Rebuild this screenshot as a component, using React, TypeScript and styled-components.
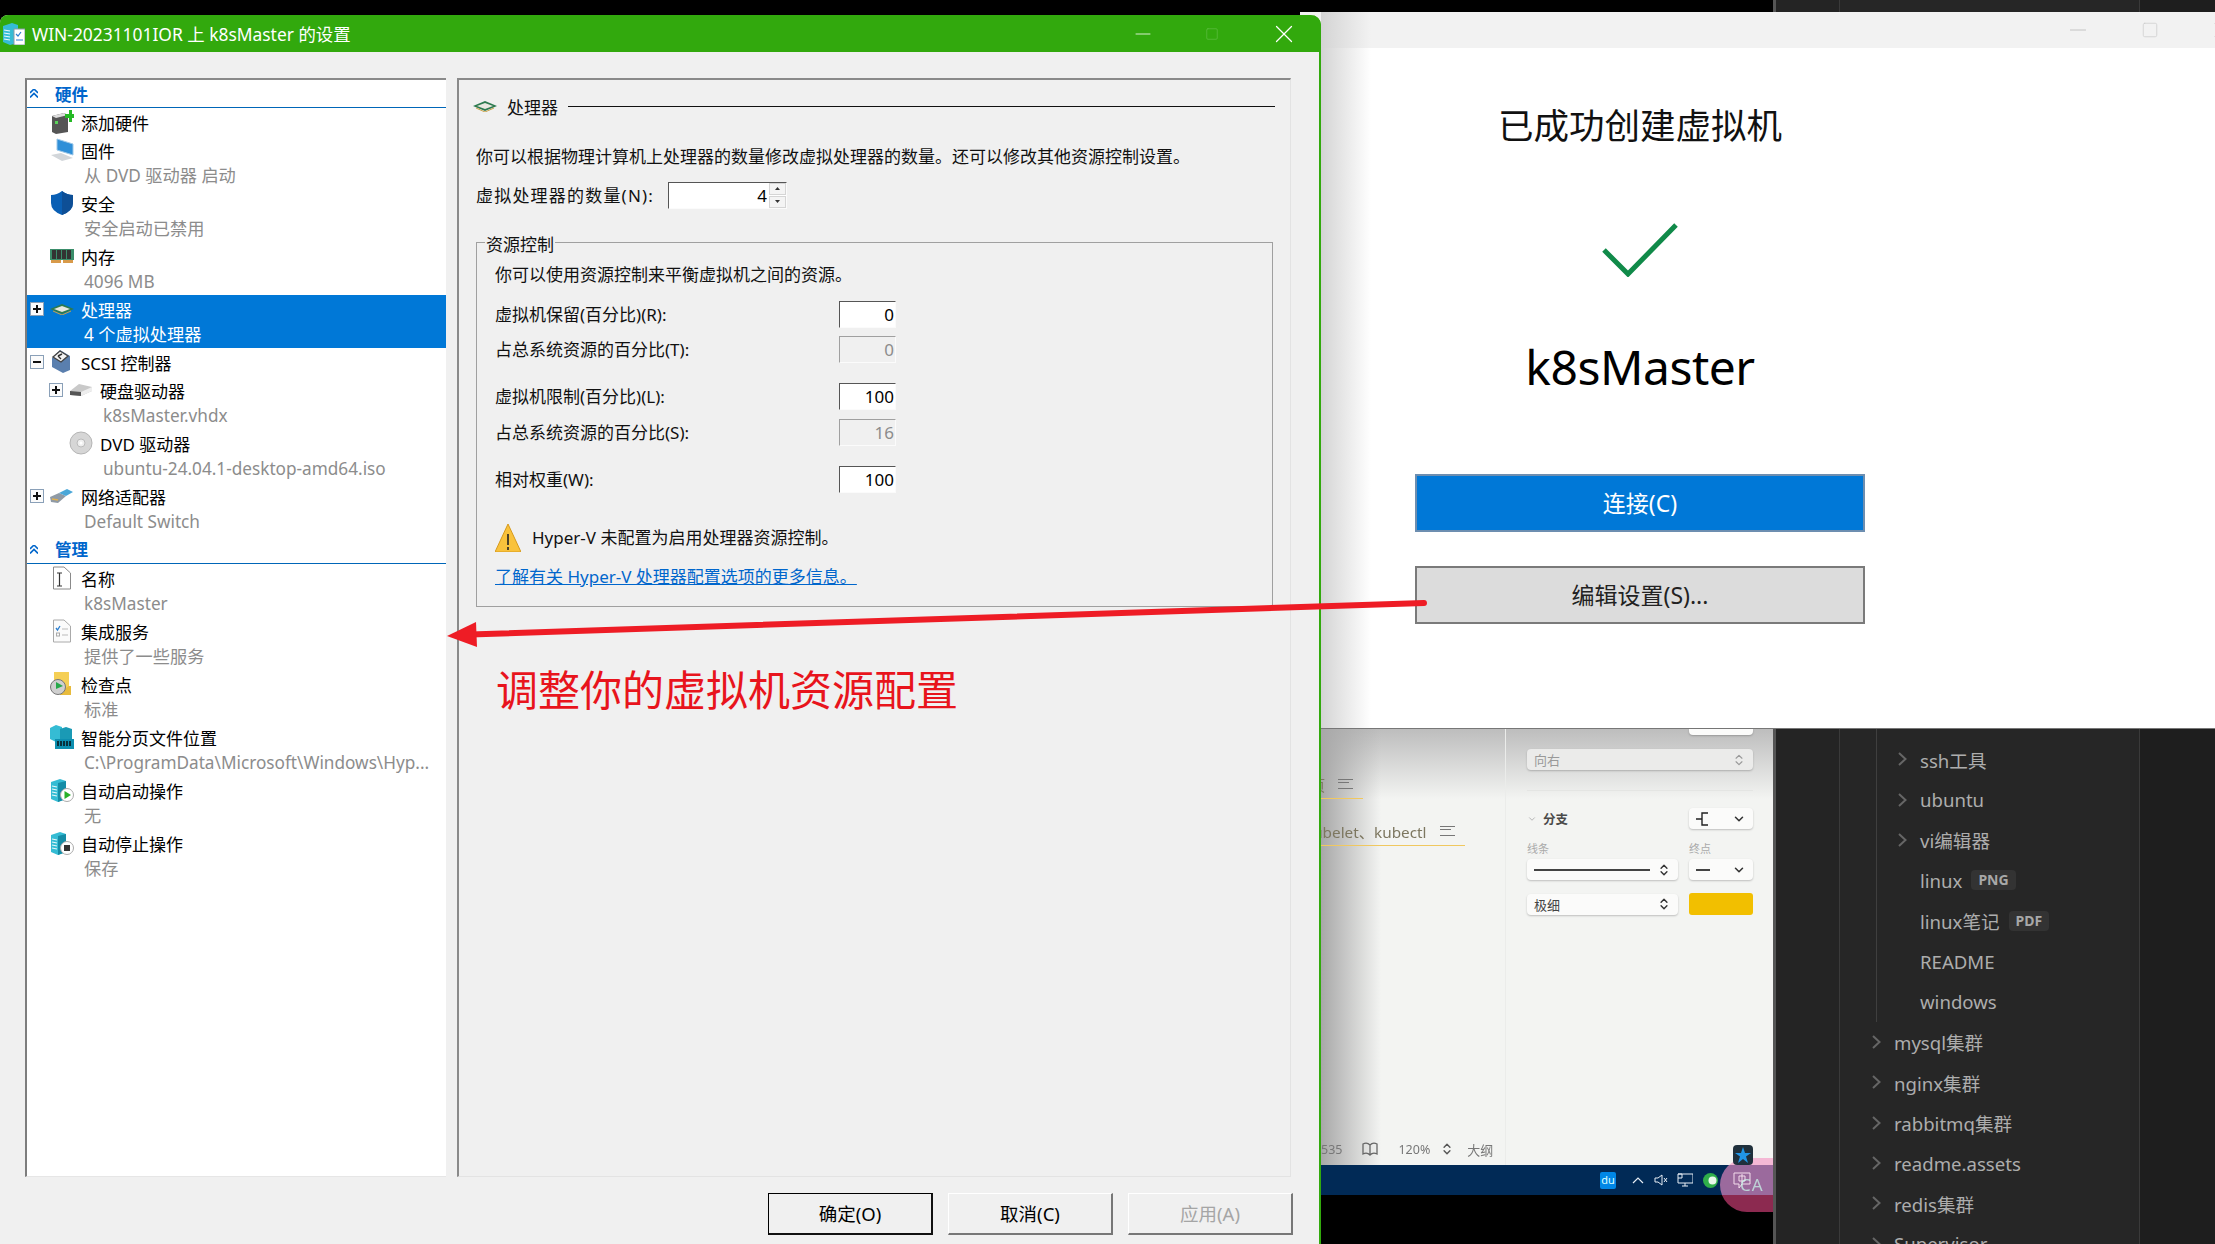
import React from 'react';
import styled, { createGlobalStyle } from 'styled-components';
import { ChevronDown, ChevronsUpDown, Minus, Square, X } from 'lucide-react';

const UI = `"Noto Sans", "Noto Sans CJK SC", sans-serif`;

const Global = createGlobalStyle`
	html, body {
		margin: 0;
		width: 2215px;
		height: 1244px;
		overflow: hidden;
		background: #000;
		font-family: ${UI};
	}
	* { box-sizing: border-box; }
`;

const Desktop = styled.div`
	position: relative;
	width: 2215px;
	height: 1244px;
	overflow: hidden;
	background: #000;
`;

/* ---------- dark file tree behind everything ---------- */

const FilePanel = styled.div`
	position: absolute;
	left: 1773px;
	top: 0;
	width: 442px;
	height: 1244px;
	display: flex;
	background: #1e1e1e;
	border-left: 3px solid #555;
`;

const FileRail = styled.div`
	width: 64px;
	background: #242424;
	border-right: 1px solid #3a3a3a;
`;

const FileTree = styled.div`
	width: 300px;
	height: 1244px;
	overflow: hidden;
	padding-top: 739px;
	background: #262626;
	border-right: 1px solid #3a3a3a;
`;

const FileGroup = styled.div`
	margin-left: 36px;
	margin-top: -11px;
	padding-top: 11px;
	border-left: 1px solid #3f3f3f;
`;

const FileRow = styled.div<{ $nested?: boolean }>`
	height: 40.4px;
	display: flex;
	align-items: center;
	padding-left: ${p => (p.$nested ? 79 : 54)}px;
	position: relative;
	margin-left: ${p => (p.$nested ? -36 : 0)}px;
	color: #adadad;
	font-size: 18.6px;
	white-space: nowrap;
	svg {
		position: absolute;
		left: ${p => (p.$nested ? 57 : 32)}px;
	}
`;

const FileBadge = styled.span`
	margin-left: 9px;
	padding: 0 7px;
	height: 20px;
	line-height: 20px;
	border-radius: 4px;
	background: #333;
	color: #a8a8a8;
	font-size: 14px;
	font-weight: 700;
`;

/* ---------- light editor behind the windows ---------- */

const Editor = styled.div`
	position: absolute;
	left: 1321px;
	top: 729px;
	width: 452px;
	height: 515px;
	display: flex;
	flex-direction: column;
	background: #000;
`;

const EditorBody = styled.div`
	position: relative;
	height: 436px;
	display: flex;
	background: #f3f4f2;
	&::before {
		content: '';
		position: absolute;
		inset: 0 0 auto 0;
		height: 70px;
		background: linear-gradient(#bdbdbd, rgba(243, 244, 242, 0));
	}
	&::after {
		content: '';
		position: absolute;
		inset: 0 auto 0 0;
		width: 60px;
		background: linear-gradient(90deg, #a8a8a8, rgba(243, 244, 242, 0));
	}
`;

const DocPane = styled.div`
	position: relative;
	z-index: 1;
	width: 185px;
	overflow: hidden;
	display: flex;
	flex-direction: column;
	border-right: 1px solid #ebecea;
	filter: blur(0.4px);
`;

const DocLine = styled.div<{ $width: number; $top: number }>`
	width: ${p => p.$width}px;
	height: 30px;
	margin-top: ${p => p.$top}px;
	display: flex;
	align-items: center;
	gap: 13px;
	white-space: nowrap;
	color: #7d7760;
	font-size: 15.3px;
	border-bottom: 1.5px solid #f0c860;
	overflow: hidden;
`;

const DocFragment = styled.span<{ $shift: number }>`
	margin-left: ${p => p.$shift}px;
`;

const MenuLines = styled.span`
	flex: none;
	width: 15px;
	height: 10px;
	border-top: 1.5px solid #777;
	border-bottom: 1.5px solid #777;
	position: relative;
	&::after {
		content: '';
		position: absolute;
		left: 0;
		top: 2.5px;
		width: 11px;
		border-top: 1.5px solid #777;
	}
`;

const DocStatus = styled.div`
	margin-top: auto;
	height: 32px;
	display: flex;
	align-items: center;
	gap: 20px;
	color: #777;
	font-size: 12.5px;
	white-space: nowrap;
`;

const StatusZoom = styled.span`
	display: flex;
	align-items: center;
	gap: 10px;
	svg { color: #555; }
`;

const StatusOutline = styled.span`
	margin-left: -7px;
	font-size: 13px;
`;

const PropsPane = styled.div`
	position: relative;
	z-index: 1;
	flex: 1;
	padding: 0 20px 0 21px;
	color: #444;
	font-size: 12.5px;
`;

const PropGrid = styled.div<{ $top?: number }>`
	display: grid;
	grid-template-columns: 151px 64px;
	column-gap: 11px;
	align-items: center;
	margin-top: ${p => p.$top || 0}px;
`;

const Select = styled.div<{ $muted?: boolean; $stub?: boolean; $top?: number }>`
	height: ${p => (p.$stub ? 6 : 21)}px;
	margin-top: ${p => p.$top || 0}px;
	padding: 0 7px;
	display: flex;
	align-items: center;
	justify-content: space-between;
	background: ${p => (p.$muted ? '#ebebea' : '#fbfbfa')};
	color: ${p => (p.$muted ? '#999' : '#444')};
	border-radius: 0 0 4px 4px;
	border-top-left-radius: ${p => (p.$stub ? 0 : 4)}px;
	border-top-right-radius: ${p => (p.$stub ? 0 : 4)}px;
	box-shadow: 0 1px 2px rgba(0, 0, 0, 0.22);
	font-size: 13px;
	svg { color: ${p => (p.$muted ? '#999' : '#333')}; }
`;

const Swatch = styled.div`
	height: 22px;
	border-radius: 3px;
	background: #f2bf00;
`;

const PropRule = styled.div`
	height: 1px;
	margin: 20px 0 17px;
	background: #e4e5e3;
`;

const PropTitle = styled.div`
	display: flex;
	align-items: center;
	gap: 6px;
	font-weight: 700;
	color: #4a4a4a;
	svg { color: #aaa; }
`;

const PropHint = styled.div`
	height: 20px;
	line-height: 20px;
	margin-top: 10px;
	color: #aaa;
	font-size: 11px;
`;

const LineSample = styled.span<{ $width: number }>`
	width: ${p => p.$width}px;
	height: 2px;
	background: #444;
`;

const Taskbar = styled.div`
	height: 30px;
	display: flex;
	align-items: center;
	padding-left: 279px;
	gap: 9.6px;
	background: #012a56;
	color: #e8eef5;
`;

const DuBadge = styled.span`
	width: 16px;
	height: 17px;
	margin-right: 6.4px;
	line-height: 15px;
	text-align: center;
	border-radius: 2px;
	background: #0087e6;
	color: #dff;
	font-size: 11px;
`;

const ImeBubble = styled.div`
	position: absolute;
	left: 399px;
	top: 429px;
	width: 53px;
	height: 54px;
	border-radius: 27px 0 0 27px;
	background: linear-gradient(#f4b8d5 0 13%, #9b6a9d 13% 68%, #8c2a50 68%);
	color: #cfe;
	overflow: hidden;
`;

const ImeLetters = styled.span`
	position: absolute;
	left: 20px;
	top: 15px;
	font-size: 17px;
	letter-spacing: 1px;
	opacity: 0.7;
`;

const ImeChat = styled.svg`
	position: absolute;
	left: 13px;
	top: 14px;
`;

const ImeStar = styled.div`
	position: absolute;
	left: 412px;
	top: 416px;
	width: 20px;
	height: 20px;
	border-radius: 4px;
	background: #20303c;
	display: flex;
	align-items: center;
	justify-content: center;
`;

/* ---------- "created" wizard window ---------- */

const WizardWindow = styled.div`
	position: absolute;
	left: 1300px;
	top: 12px;
	width: 915px;
	height: 717px;
	background: #fff;
	border-bottom: 1px solid #777;
	&::before {
		content: '';
		position: absolute;
		left: 21px;
		top: 0;
		bottom: 0;
		width: 50px;
		background: linear-gradient(90deg, #d4d4d4, rgba(255, 255, 255, 0));
	}
`;

const WizardBar = styled.div`
	height: 36px;
	display: flex;
	align-items: center;
	justify-content: flex-end;
	gap: 50px;
	background: #f2f2f2;
	color: #aaa;
	margin-right: -18px;
`;

const WizardBody = styled.div`
	width: 450px;
	margin-left: 115px;
	display: flex;
	flex-direction: column;
	align-items: center;
`;

const WizardTitle = styled.div`
	margin-top: 52px;
	height: 50px;
	line-height: 50px;
	font-size: 35.5px;
	color: #111;
`;

const CheckMark = styled.svg`
	margin-top: 73px;
	display: block;
`;

const VmName = styled.div`
	margin-top: 55px;
	height: 70px;
	line-height: 70px;
	font-size: 48px;
	letter-spacing: -0.5px;
	color: #000;
`;

const WizardButton = styled.div<{ $primary?: boolean }>`
	width: 450px;
	height: 58px;
	margin-top: ${p => (p.$primary ? 72 : 34)}px;
	padding-bottom: 2px;
	display: flex;
	align-items: center;
	justify-content: center;
	font-size: 23px;
	background: ${p => (p.$primary ? '#0078d7' : '#dcdcdc')};
	color: ${p => (p.$primary ? '#fff' : '#222')};
	border: 2px solid ${p => (p.$primary ? '#6d8eb0' : '#7a7a7a')};
`;

/* ---------- settings dialog ---------- */

const Dialog = styled.div`
	position: absolute;
	left: 0;
	top: 15px;
	width: 1321px;
	height: 1229px;
	display: flex;
	flex-direction: column;
	background: #f0f0f0;
	border-right: 2px solid #32a90d;
	border-top-left-radius: 8px;
	border-top-right-radius: 10px;
`;

const TitleBar = styled.div`
	flex: none;
	height: 37px;
	margin-right: -2px;
	display: flex;
	align-items: center;
	padding-left: 3px;
	background: #32a90d;
	color: #fff;
	font-size: 17.4px;
	border-top-left-radius: 8px;
	border-top-right-radius: 10px;
`;

const TitleText = styled.span`
	margin-left: 7px;
	flex: 1;
`;

const TitleButtons = styled.div`
	display: flex;
	align-items: center;
	gap: 50px;
	margin-right: 22px;
`;

const DialogBody = styled.div`
	height: 1099px;
	margin-top: 26px;
	padding-left: 25px;
	display: flex;
	gap: 11px;
`;

const TreePane = styled.div`
	width: 421px;
	height: 100%;
	background: #fff;
	border-top: 2px solid #8a8a8a;
	border-left: 2px solid #7d7d7d;
	border-bottom: 1px solid #e6e6e6;
	font-size: 17px;
`;

const SectionHead = styled.div<{ $tall?: boolean }>`
	height: ${p => (p.$tall ? 29 : 28)}px;
	display: flex;
	align-items: center;
	padding-left: 3px;
	border-bottom: 1px solid #0066b8;
	color: #0066cc;
	font-weight: 700;
	font-size: 16.5px;
`;

const SectionLabel = styled.span`
	margin-left: 17px;
`;

const Entry = styled.div<{ $selected?: boolean }>`
	background: ${p => (p.$selected ? '#0078d7' : 'transparent')};
	color: ${p => (p.$selected ? '#fff' : '#000')};
`;

const EntryTitle = styled.div<{ $level: number }>`
	height: 28px;
	display: flex;
	align-items: center;
	padding-left: ${p => 3 + p.$level * 19}px;
	white-space: nowrap;
`;

const ExpanderSlot = styled.span`
	flex: none;
	width: 20px;
	display: flex;
	align-items: center;
`;

const IconSlot = styled.span`
	flex: none;
	width: 31px;
	display: flex;
	align-items: center;
`;

const EntrySub = styled.div<{ $level: number; $selected?: boolean }>`
	height: 25px;
	line-height: 23px;
	padding-left: ${p => 57 + p.$level * 19}px;
	font-size: 17.2px;
	color: ${p => (p.$selected ? '#fff' : '#8c8c8c')};
	white-space: nowrap;
`;

const Expander = styled.span`
	width: 14px;
	height: 14px;
	display: block;
	position: relative;
	background: #fbfbfb;
	border: 1px solid #8aa0b8;
`;

const ExpanderBar = styled.span<{ $vertical?: boolean }>`
	position: absolute;
	background: #111;
	left: ${p => (p.$vertical ? 5 : 2)}px;
	top: ${p => (p.$vertical ? 2 : 5)}px;
	width: ${p => (p.$vertical ? 2 : 8)}px;
	height: ${p => (p.$vertical ? 8 : 2)}px;
`;

const DetailPane = styled.div`
	width: 834px;
	height: 100%;
	padding-left: 17px;
	border-top: 2px solid #8a8a8a;
	border-left: 2px solid #8a8a8a;
	border-right: 1px solid #e3e3e3;
	border-bottom: 1px solid #e3e3e3;
	font-size: 17px;
	color: #111;
`;

const DetailHead = styled.div`
	margin: 13px 0 0 -3px;
	height: 26px;
	display: flex;
	align-items: center;
	gap: 10px;
	white-space: nowrap;
	svg { flex: none; }
`;

const HeadRule = styled.span`
	flex: none;
	width: 707px;
	height: 1px;
	background: #111;
`;

const Paragraph = styled.div<{ $top: number }>`
	margin-top: ${p => p.$top}px;
	height: 24px;
	line-height: 24px;
	white-space: nowrap;
`;

const CountRow = styled.div`
	margin-top: 13px;
	height: 26px;
	display: flex;
	align-items: center;
`;

const CountLabel = styled.span`
	width: 192px;
	margin-top: -2px;
	letter-spacing: 1.2px;
	white-space: nowrap;
`;

const NumberBox = styled.div<{ $disabled?: boolean; $width: number }>`
	width: ${p => p.$width}px;
	height: 27px;
	line-height: 25px;
	padding-right: 1px;
	text-align: right;
	background: ${p => (p.$disabled ? '#f0f0f0' : '#fff')};
	color: ${p => (p.$disabled ? '#8c8c8c' : '#000')};
	border-top: 1px solid ${p => (p.$disabled ? '#a0a0a0' : '#555')};
	border-left: 1px solid ${p => (p.$disabled ? '#a0a0a0' : '#555')};
	border-right: 1px solid #fbfbfb;
	border-bottom: 1px solid #fbfbfb;
`;

const SpinBox = styled(NumberBox)`
	display: flex;
	justify-content: flex-end;
	padding-right: 0;
`;

const SpinValue = styled.span`
	margin-right: 2px;
`;

const SpinButtons = styled.span`
	width: 17px;
	display: flex;
	flex-direction: column;
	gap: 1px;
`;

const SpinButton = styled.span`
	flex: 1;
	display: flex;
	align-items: center;
	justify-content: center;
	background: #f4f4f4;
	border: 1px solid #d5d5d5;
	svg { display: block; }
`;

const ResourceBox = styled.div`
	position: relative;
	margin-top: 34px;
	width: 797px;
	height: 365px;
	padding: 18px 0 0 18px;
	border: 1px solid #a0a0a0;
`;

const Legend = styled.span`
	position: absolute;
	left: 8px;
	top: -10px;
	padding: 0 1px;
	line-height: 24px;
	background: #f0f0f0;
`;

const FieldRow = styled.div<{ $top: number }>`
	margin-top: ${p => p.$top}px;
	display: flex;
	align-items: center;
	height: 27px;
`;

const FieldLabel = styled.span`
	width: 344px;
	margin-top: -3px;
	white-space: nowrap;
`;

const WarningRow = styled.div`
	margin-top: 31px;
	height: 28px;
	display: flex;
	align-items: center;
	gap: 11px;
	white-space: nowrap;
`;

const WarningText = styled.span`
	margin-top: -3px;
`;

const HelpLink = styled.div`
	margin-top: 13px;
	height: 24px;
	line-height: 24px;
	color: #0066cc;
	text-decoration: underline;
	white-space: nowrap;
`;

const Footer = styled.div`
	margin-top: 16px;
	padding-left: 768px;
	display: flex;
	gap: 15px;
`;

const DialogButton = styled.div<{ $default?: boolean; $disabled?: boolean }>`
	width: 165px;
	height: 42px;
	padding-bottom: 2px;
	display: flex;
	align-items: center;
	justify-content: center;
	font-size: 18.5px;
	background: #f0f0f0;
	color: ${p => (p.$disabled ? '#a5a5a5' : '#000')};
	border-top: 1px solid ${p => (p.$default ? '#000' : '#fff')};
	border-left: 1px solid ${p => (p.$default ? '#000' : '#fff')};
	border-right: 2px solid ${p => (p.$default ? '#111' : '#777')};
	border-bottom: 2px solid ${p => (p.$default ? '#111' : '#777')};
`;

/* ---------- red annotation on top ---------- */

const AnnotationArrow = styled.svg`
	position: absolute;
	left: 0;
	top: 0;
	pointer-events: none;
`;

const AnnotationText = styled.div`
	position: absolute;
	left: 496px;
	top: 660px;
	line-height: 60px;
	font-size: 42px;
	color: #e8141c;
	white-space: nowrap;
`;

/* ---------- drawn icons ---------- */

const Ico = ({ w = 24, h = 24, vb, children }: { w?: number; h?: number; vb?: string; children: React.ReactNode }) => (
	<svg width={w} height={h} viewBox={vb || `0 0 ${w} ${h}`} style={{ display: 'block', flex: 'none' }}>
		{children}
	</svg>
);

const ServerShape = () => (
	<>
		<path d="M1 4 L10 1 L16 3 L16 21 L8 24 L1 21 Z" fill="#35bcd4" />
		<path d="M8 5 L16 3 L16 21 L8 24 Z" fill="#148ca6" />
		<path d="M2 8 L7 9 M2 11 L7 12 M2 14 L7 15 M2 17 L7 18" stroke="#e8f8fb" strokeWidth="1.2" />
	</>
);

const AddHardwareIcon = () => (
	<Ico>
		<path d="M2 6 L14 3 L18 5 L18 22 L6 24 L2 22 Z" fill="#555" />
		<path d="M2 6 L14 3 L18 5 L6 8 Z" fill="#ddd" />
		<rect x="5" y="11" width="3" height="3" fill="#5bd35b" />
		<path d="M15 4 H19 V0 H22 V4 H25 V8 H22 V12 H19 V8 H15 Z" fill="#25b925" />
	</Ico>
);

const FirmwareIcon = () => (
	<Ico>
		<path d="M7 1 L23 6 L23 17 L7 12 Z" fill="#2f8fd8" stroke="#9cc7e8" />
		<path d="M1 17 L11 15 L23 20 L12 23 Z" fill="#d2d6da" />
	</Ico>
);

const ShieldIcon = () => (
	<Ico>
		<path d="M1 4 Q7 4 12 0 Q17 4 23 4 L23 12 Q23 20 12 24 Q1 20 1 12 Z" fill="#0a5fb4" />
		<path d="M12 0 Q17 4 23 4 L23 12 Q23 20 12 24 Z" fill="#0e4f96" />
	</Ico>
);

const MemoryIcon = () => (
	<Ico h={16}>
		<rect x="0" y="1" width="24" height="11" fill="#3a8d6a" />
		<rect x="2" y="2" width="4" height="9" fill="#333" />
		<rect x="7" y="2" width="4" height="9" fill="#333" />
		<rect x="12" y="2" width="4" height="9" fill="#333" />
		<rect x="17" y="2" width="4" height="9" fill="#333" />
		<rect x="1" y="12" width="10" height="3" fill="#d89a4a" />
		<rect x="13" y="12" width="10" height="3" fill="#d89a4a" />
	</Ico>
);

const CpuIcon = ({ w = 24 }: { w?: number }) => (
	<Ico w={w} h={12} vb="0 0 24 12">
		<path d="M0 6 L12 1 L24 6 L12 11 Z" fill="#2d7a4f" />
		<path d="M4 6 L12 3 L20 6 L12 9 Z" fill="#e8e8e0" />
		<path d="M3 8 L12 12 L21 8" stroke="#c9a24a" strokeWidth="1" fill="none" />
	</Ico>
);

const ScsiIcon = () => (
	<Ico>
		<path d="M2 8 L10 0 L20 6 L20 20 L13 23 L2 17 Z" fill="#5a7fae" />
		<path d="M3 7 L10 1 L18 6 L11 12 Z" fill="#f4f4f4" stroke="#444" strokeWidth="1.4" />
		<path d="M8 6 L12 4 M8 6 L11 9" stroke="#333" strokeWidth="1.4" />
	</Ico>
);

const DiskIcon = () => (
	<Ico h={14}>
		<path d="M1 8 L10 1 L23 4 L23 8 L12 13 L1 12 Z" fill="#c9c9c9" />
		<path d="M1 8 L12 9 L12 13 L1 12 Z" fill="#555" />
		<path d="M12 9 L23 4 L23 8 L12 13 Z" fill="#eee" />
	</Ico>
);

const DvdIcon = () => (
	<Ico>
		<circle cx="12" cy="12" r="11" fill="#d6d6d6" stroke="#b5b5b5" />
		<circle cx="12" cy="12" r="4" fill="#eee" stroke="#bbb" />
		<circle cx="12" cy="12" r="1.5" fill="#fff" />
	</Ico>
);

const NetworkIcon = () => (
	<Ico h={16}>
		<path d="M0 9 L9 5 L16 8 L8 15 L1 14 Z" fill="#8f9aa5" />
		<path d="M9 5 L17 1 L23 4 L16 8 Z" fill="#4aa7d8" />
		<path d="M2 11 L8 12" stroke="#e0b050" strokeWidth="1.5" />
	</Ico>
);

const NameIcon = () => (
	<Ico>
		<path d="M3.5 1 H14 L20.5 7 V23 H3.5 Z" fill="#fff" stroke="#8a8a8a" />
		<path d="M7 7 H12 M7 20 H12 M9.5 7 V20" stroke="#333" strokeWidth="1.2" fill="none" />
	</Ico>
);

const ServicesIcon = () => (
	<Ico>
		<path d="M3.5 1 H14 L20.5 7 V23 H3.5 Z" fill="#fbfbfb" stroke="#aaa" />
		<path d="M6 9 L7.5 11 L10 7" stroke="#2b7fd0" strokeWidth="1.3" fill="none" />
		<path d="M12 10 H18 M12 16 H18" stroke="#bbb" />
		<rect x="6.5" y="14" width="3" height="3" fill="none" stroke="#aaa" />
	</Ico>
);

const CheckpointIcon = () => (
	<Ico>
		<path d="M4 0 H19 V22 H10 V10 H4 Z" fill="#f5cf55" />
		<path d="M19 14 H21 V23 H10 V20 Z" fill="#e8bb3c" />
		<circle cx="8" cy="15" r="7.5" fill="#cfcfcf" stroke="#777" />
		<path d="M6 10 L13 14 L6 17 Z" fill="#25a84a" />
	</Ico>
);

const PagingIcon = () => (
	<Ico>
		<path d="M0 3 L6 0 L12 2 L12 15 L6 17 L0 14 Z" fill="#35bcd4" />
		<path d="M10 4 L16 2 L22 4 L22 16 L10 16 Z" fill="#1a9ab5" />
		<rect x="5" y="14" width="20" height="10" fill="#0d8fb0" />
		<path d="M8 16 V21 M11 16 V21 M14 16 V21 M17 16 V21 M20 16 V21" stroke="#08303c" strokeWidth="2" />
	</Ico>
);

const AutoStartIcon = () => (
	<Ico>
		<ServerShape />
		<circle cx="17" cy="17" r="6.5" fill="#fff" stroke="#aaa" />
		<path d="M14.5 13 L21 17 L14.5 21 Z" fill="#28b028" />
	</Ico>
);

const AutoStopIcon = () => (
	<Ico>
		<ServerShape />
		<circle cx="17" cy="17" r="6.5" fill="#fff" stroke="#aaa" />
		<rect x="14" y="14" width="6" height="6" fill="#333" />
	</Ico>
);

const WindowIcon = () => (
	<Ico w={22} h={22}>
		<path d="M0 3 L9 0 L15 2 L15 20 L7 22 L0 19 Z" fill="#35bcd4" />
		<path d="M1 7 L7 8 M1 10 L7 11 M1 13 L7 14 M1 16 L7 17" stroke="#e8f8fb" strokeWidth="1.2" />
		<path d="M11 6 H22 V22 H11 Z" fill="#fff" stroke="#8a9aa8" />
		<path d="M13 11 L15 13 L18 9 M13 17 H20" stroke="#2b7fd0" strokeWidth="1.2" fill="none" />
	</Ico>
);

const WarningIcon = () => (
	<Ico w={26} h={28}>
		<path d="M13 0 L26 28 H0 Z" fill="#f9c23c" stroke="#d69a1c" />
		<path d="M13 10 V21 M13 23 V26" stroke="#222" strokeWidth="1.6" />
	</Ico>
);

const Collapse = () => (
	<Ico w={8} h={9}>
		<path d="M0 4 L4 0 L8 4 M0 8.5 L4 4.5 L8 8.5" stroke="#0066cc" strokeWidth="1.6" fill="none" />
	</Ico>
);

const FileChevron = () => (
	<svg width="9" height="14" viewBox="0 0 9 14">
		<path d="M1 1 L7.5 7 L1 13" stroke="#666" strokeWidth="2" fill="none" />
	</svg>
);

/* ---------- data ---------- */

type TreeItem = {
	label: string;
	sub?: string;
	icon: React.ReactNode;
	level?: number;
	toggle?: 'plus' | 'minus';
	selected?: boolean;
};

const hardware: TreeItem[] = [
	{ label: '添加硬件', icon: <AddHardwareIcon /> },
	{ label: '固件', sub: '从 DVD 驱动器 启动', icon: <FirmwareIcon /> },
	{ label: '安全', sub: '安全启动已禁用', icon: <ShieldIcon /> },
	{ label: '内存', sub: '4096 MB', icon: <MemoryIcon /> },
	{ label: '处理器', sub: '4 个虚拟处理器', icon: <CpuIcon />, toggle: 'plus', selected: true },
	{ label: 'SCSI 控制器', icon: <ScsiIcon />, toggle: 'minus' },
	{ label: '硬盘驱动器', sub: 'k8sMaster.vhdx', icon: <DiskIcon />, level: 1, toggle: 'plus' },
	{ label: 'DVD 驱动器', sub: 'ubuntu-24.04.1-desktop-amd64.iso', icon: <DvdIcon />, level: 1 },
	{ label: '网络适配器', sub: 'Default Switch', icon: <NetworkIcon />, toggle: 'plus' },
];

const management: TreeItem[] = [
	{ label: '名称', sub: 'k8sMaster', icon: <NameIcon /> },
	{ label: '集成服务', sub: '提供了一些服务', icon: <ServicesIcon /> },
	{ label: '检查点', sub: '标准', icon: <CheckpointIcon /> },
	{ label: '智能分页文件位置', sub: 'C:\\ProgramData\\Microsoft\\Windows\\Hyp...', icon: <PagingIcon /> },
	{ label: '自动启动操作', sub: '无', icon: <AutoStartIcon /> },
	{ label: '自动停止操作', sub: '保存', icon: <AutoStopIcon /> },
];

const nestedFiles = ['ssh工具', 'ubuntu', 'vi编辑器'];
const topFiles = ['mysql集群', 'nginx集群', 'rabbitmq集群', 'readme.assets', 'redis集群', 'Supervisor'];

const TreeEntry = ({ item }: { item: TreeItem }) => {
	const level = item.level || 0;
	return (
		<Entry $selected={item.selected}>
			<EntryTitle $level={level}>
				<ExpanderSlot>
					{item.toggle && (
						<Expander>
							<ExpanderBar />
							{item.toggle === 'plus' && <ExpanderBar $vertical />}
						</Expander>
					)}
				</ExpanderSlot>
				<IconSlot>{item.icon}</IconSlot>
				{item.label}
			</EntryTitle>
			{item.sub && <EntrySub $level={level} $selected={item.selected}>{item.sub}</EntrySub>}
		</Entry>
	);
};

export default function App() {
	return (
		<Desktop>
			<Global />

			<FilePanel>
				<FileRail />
				<FileTree>
					<FileGroup>
						{nestedFiles.map(name => (
							<FileRow $nested key={name}><FileChevron />{name}</FileRow>
						))}
						<FileRow $nested>linux<FileBadge>PNG</FileBadge></FileRow>
						<FileRow $nested>linux笔记<FileBadge>PDF</FileBadge></FileRow>
						<FileRow $nested>README</FileRow>
						<FileRow $nested>windows</FileRow>
					</FileGroup>
					{topFiles.map(name => (
						<FileRow key={name}><FileChevron />{name}</FileRow>
					))}
				</FileTree>
			</FilePanel>

			<Editor>
				<EditorBody>
					<DocPane>
						<DocLine $width={42} $top={40}>
							<DocFragment $shift={-11}>页</DocFragment>
							<MenuLines />
						</DocLine>
						<DocLine $width={144} $top={17}>
							<DocFragment $shift={-16}>kubelet、kubectl</DocFragment>
							<MenuLines />
						</DocLine>
						<DocStatus>
							<span>535</span>
							<Ico w={16} h={14}>
								<path d="M1 2 Q5 0 8 3 Q11 0 15 2 V12 Q11 10 8 13 Q5 10 1 12 Z M8 3 V13" stroke="#666" fill="none" strokeWidth="1.3" />
							</Ico>
							<StatusZoom>120%<ChevronsUpDown size={14} strokeWidth={2.4} /></StatusZoom>
							<StatusOutline>大纲</StatusOutline>
						</DocStatus>
					</DocPane>
					<PropsPane>
						<PropGrid>
							<span />
							<Select $stub />
						</PropGrid>
						<Select $muted $top={14}>向右<ChevronsUpDown size={14} /></Select>
						<PropRule />
						<PropGrid>
							<PropTitle><ChevronDown size={10} />分支</PropTitle>
							<Select>
								<Ico w={14} h={14}><path d="M0 7 H6 M12 1 H6 V13 H12" stroke="#222" strokeWidth="1.4" fill="none" /></Ico>
								<ChevronDown size={14} strokeWidth={2.6} />
							</Select>
						</PropGrid>
						<PropGrid>
							<PropHint>线条</PropHint>
							<PropHint>终点</PropHint>
						</PropGrid>
						<PropGrid>
							<Select><LineSample $width={116} /><ChevronsUpDown size={14} strokeWidth={2.4} /></Select>
							<Select><LineSample $width={14} /><ChevronDown size={14} strokeWidth={2.6} /></Select>
						</PropGrid>
						<PropGrid $top={13}>
							<Select>极细<ChevronsUpDown size={14} strokeWidth={2.4} /></Select>
							<Swatch />
						</PropGrid>
					</PropsPane>
				</EditorBody>
				<Taskbar>
					<DuBadge>du</DuBadge>
					<Ico w={12} h={8}><path d="M1 7 L6 2 L11 7" stroke="#e8eef5" strokeWidth="1.2" fill="none" /></Ico>
					<Ico w={14} h={12}><path d="M1 4 H4 L8 1 V11 L4 8 H1 Z M10 4 L13 8 M13 4 L10 8" stroke="#e8eef5" strokeWidth="1" fill="none" /></Ico>
					<Ico w={16} h={14}><path d="M1 1 H16 V10 H1 Z M8 10 V13 M5 13 H11 M1 1 H5 V5 H1" stroke="#e8eef5" strokeWidth="1" fill="none" /></Ico>
					<Ico w={15} h={15}><circle cx="7.5" cy="7.5" r="7.5" fill="#2fae4a" /><circle cx="9.5" cy="7.5" r="4" fill="#e8f8ea" /></Ico>
				</Taskbar>
				<ImeBubble>
					<ImeChat width="18" height="17" viewBox="0 0 18 17">
						<path d="M1 1 H17 V12 H9 L6 16 V12 H1 Z M6 4 H12 V9 H6 Z M9 2 V11" stroke="#f4dcec" strokeWidth="1" fill="none" />
					</ImeChat>
					<ImeLetters>CA</ImeLetters>
				</ImeBubble>
				<ImeStar>
					<Ico w={16} h={16}><path d="M8 0 L10 6 L16 6 L11 9.5 L13 16 L8 12 L3 16 L5 9.5 L0 6 L6 6 Z" fill="#2196e8" /></Ico>
				</ImeStar>
			</Editor>

			<WizardWindow>
				<WizardBar>
					<Minus size={26} strokeWidth={0.6} />
					<Square size={18} strokeWidth={1} color="#ccc" />
					<X size={24} strokeWidth={0.8} />
				</WizardBar>
				<WizardBody>
					<WizardTitle>已成功创建虚拟机</WizardTitle>
					<CheckMark width="76" height="54" viewBox="0 0 76 54">
						<path d="M2 27 L26 51 L74 2" stroke="#108a49" strokeWidth="5" fill="none" />
					</CheckMark>
					<VmName>k8sMaster</VmName>
					<WizardButton $primary>连接(C)</WizardButton>
					<WizardButton>编辑设置(S)...</WizardButton>
				</WizardBody>
			</WizardWindow>

			<Dialog>
				<TitleBar>
					<WindowIcon />
					<TitleText>WIN-20231101IOR 上 k8sMaster 的设置</TitleText>
					<TitleButtons>
						<Minus size={24} strokeWidth={0.8} />
						<Square size={14} strokeWidth={1} color="#69c24f" />
						<X size={30} strokeWidth={1} />
					</TitleButtons>
				</TitleBar>
				<DialogBody>
					<TreePane>
						<SectionHead><Collapse /><SectionLabel>硬件</SectionLabel></SectionHead>
						{hardware.map(item => <TreeEntry key={item.label} item={item} />)}
						<SectionHead $tall><Collapse /><SectionLabel>管理</SectionLabel></SectionHead>
						{management.map(item => <TreeEntry key={item.label} item={item} />)}
					</TreePane>
					<DetailPane>
						<DetailHead>
							<CpuIcon />
							处理器
							<HeadRule />
						</DetailHead>
						<Paragraph $top={26}>你可以根据物理计算机上处理器的数量修改虚拟处理器的数量。还可以修改其他资源控制设置。</Paragraph>
						<CountRow>
							<CountLabel>虚拟处理器的数量(N):</CountLabel>
							<SpinBox $width={119}>
								<SpinValue>4</SpinValue>
								<SpinButtons>
									<SpinButton><Ico w={5} h={3}><path d="M0 3 L2.5 0 L5 3 Z" fill="#333" /></Ico></SpinButton>
									<SpinButton><Ico w={5} h={3}><path d="M0 0 L2.5 3 L5 0 Z" fill="#333" /></Ico></SpinButton>
								</SpinButtons>
							</SpinBox>
						</CountRow>
						<ResourceBox>
							<Legend>资源控制</Legend>
							<Paragraph $top={2}>你可以使用资源控制来平衡虚拟机之间的资源。</Paragraph>
							<FieldRow $top={14}>
								<FieldLabel>虚拟机保留(百分比)(R):</FieldLabel>
								<NumberBox $width={57}>0</NumberBox>
							</FieldRow>
							<FieldRow $top={8}>
								<FieldLabel>占总系统资源的百分比(T):</FieldLabel>
								<NumberBox $width={57} $disabled>0</NumberBox>
							</FieldRow>
							<FieldRow $top={20}>
								<FieldLabel>虚拟机限制(百分比)(L):</FieldLabel>
								<NumberBox $width={57}>100</NumberBox>
							</FieldRow>
							<FieldRow $top={9}>
								<FieldLabel>占总系统资源的百分比(S):</FieldLabel>
								<NumberBox $width={57} $disabled>16</NumberBox>
							</FieldRow>
							<FieldRow $top={20}>
								<FieldLabel>相对权重(W):</FieldLabel>
								<NumberBox $width={57}>100</NumberBox>
							</FieldRow>
							<WarningRow>
								<WarningIcon />
								<WarningText>Hyper-V 未配置为启用处理器资源控制。</WarningText>
							</WarningRow>
							<HelpLink>了解有关 Hyper-V 处理器配置选项的更多信息。</HelpLink>
						</ResourceBox>
					</DetailPane>
				</DialogBody>
				<Footer>
					<DialogButton $default>确定(O)</DialogButton>
					<DialogButton>取消(C)</DialogButton>
					<DialogButton $disabled>应用(A)</DialogButton>
				</Footer>
			</Dialog>

			<AnnotationArrow width="2215" height="1244">
				<line x1="1424" y1="603" x2="470" y2="634.5" stroke="#ee1c25" strokeWidth="6" strokeLinecap="round" />
				<path d="M447 636 L476 622 L477 647 Z" fill="#ee1c25" />
			</AnnotationArrow>
			<AnnotationText>调整你的虚拟机资源配置</AnnotationText>
		</Desktop>
	);
}
